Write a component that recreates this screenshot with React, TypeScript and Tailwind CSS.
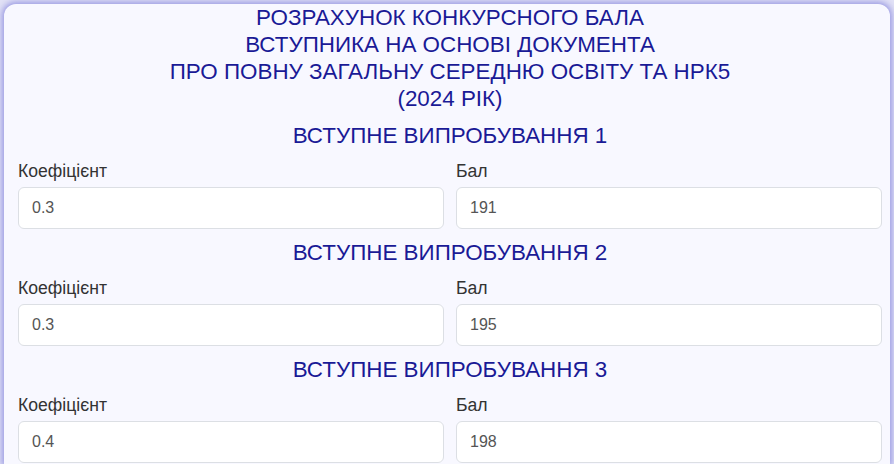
import React from "react";

const exams = [
  { n: 1, k: "0.3", b: "191" },
  { n: 2, k: "0.3", b: "195" },
  { n: 3, k: "0.4", b: "198" },
];

function Field({ label, value }: { label: string; value: string }) {
  return (
    <div className="flex flex-col">
      <label className="mb-1 text-[17.6px] leading-6 text-[#333]">{label}</label>
      <input
        readOnly
        value={value}
        className="h-[42px] rounded-md border border-[#dcdfe4] bg-white px-[13px] text-[16px] text-[#555] outline-none"
      />
    </div>
  );
}

export default function App() {
  return (
    <div className="h-[464px] overflow-hidden bg-[#e2e2f6] px-[4px] pt-[4px] font-['Liberation_Sans',Arial,sans-serif]">
      <div className="h-full rounded-t-xl bg-[#f8f8ff] pl-[14px] pr-[8px] shadow-[0_0_6px_2px_rgba(90,90,210,0.55)]">
        <h1 className="text-center text-[22.4px] leading-[27px] text-[#1a1a96]">
          РОЗРАХУНОК КОНКУРСНОГО БАЛА
          <br />
          ВСТУПНИКА НА ОСНОВІ ДОКУМЕНТА
          <br />
          ПРО ПОВНУ ЗАГАЛЬНУ СЕРЕДНЮ ОСВІТУ ТА НРК5
          <br />
          (2024 РІК)
        </h1>
        {exams.map((e) => (
          <section key={e.n}>
            <h2 className="mt-[10px] mb-[10px] text-center text-[22.4px] leading-[27px] text-[#1a1a96]">
              ВСТУПНЕ ВИПРОБУВАННЯ {e.n}
            </h2>
            <div className="grid grid-cols-2 gap-3">
              <Field label="Коефіцієнт" value={e.k} />
              <Field label="Бал" value={e.b} />
            </div>
          </section>
        ))}
      </div>
    </div>
  );
}
